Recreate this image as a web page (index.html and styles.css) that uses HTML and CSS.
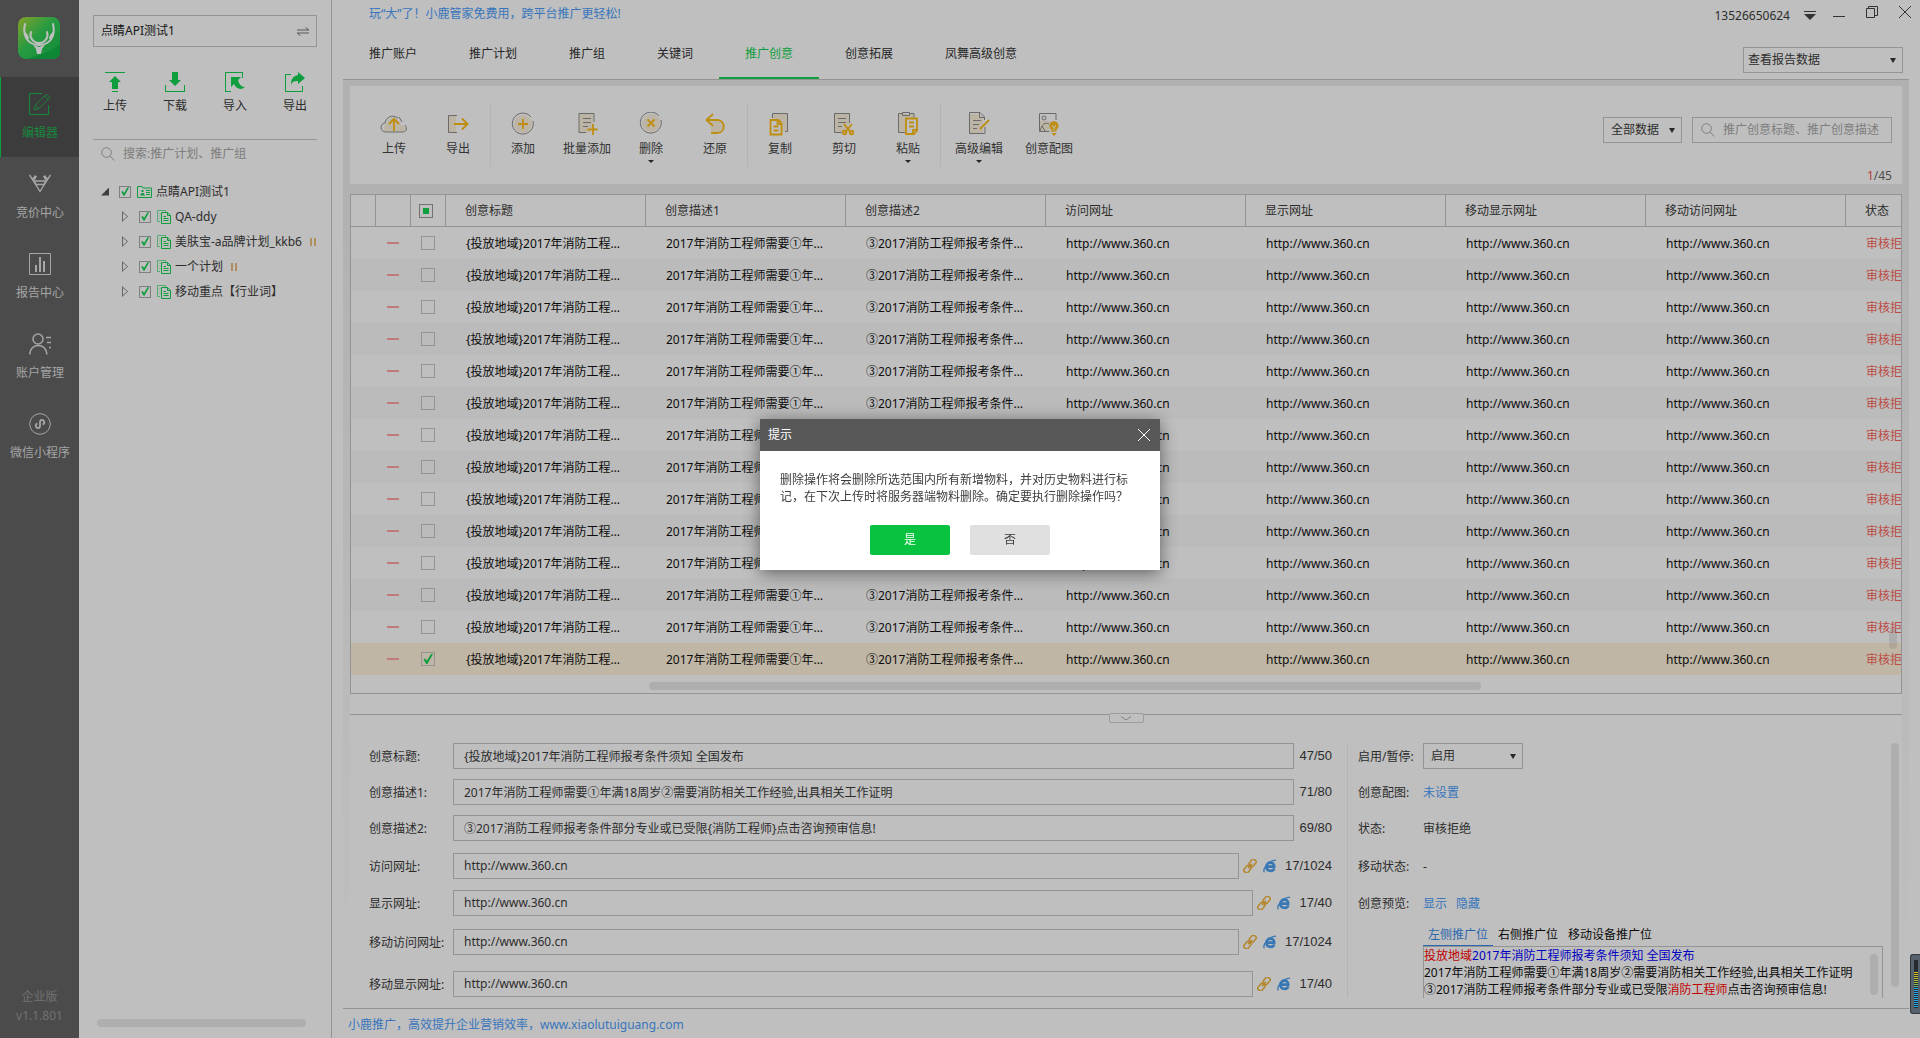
FILE: index.html
```html
<!DOCTYPE html>
<html lang="zh-CN">
<head>
    <meta charset="UTF-8">
    <title>小鹿推广编辑器</title>
    <link rel="stylesheet" href="styles.css">
</head>
<body>
    <svg class="sprite" aria-hidden="true">
        <symbol id="i-search" viewBox="0 0 14 14"><circle cx="5.5" cy="5.5" r="4.8"/><path d="M9 9l4.5 4.5"/></symbol>
        <symbol id="i-plan" viewBox="0 0 14 14"><path d="M3 11.5H.5V.5h8v2M2.5 3.5h1M2.5 6h1M2.5 8.500h1" opacity=".6"/><path d="M4.500 2.500h6l3 3v8h-9zM10.500 2.500v3h3M6.500 6.500h2.500M6.500 8.500h5M6.500 10.500h5"/></symbol>
        <symbol id="i-link" viewBox="0 0 14 14"><g transform="rotate(-50 7 7)" stroke-width="1.500"><rect x="-.8" y="4.500" width="7.200" height="5" rx="1.500"/><rect x="7.600" y="4.500" width="7.200" height="5" rx="1.500"/><path d="M4 7h6"/></g></symbol>
        <symbol id="i-ie" viewBox="0 0 14 14"><path d="M11.300 9.300C10 13.200 3.300 12.700 3.400 7.600 3.500 2.400 11.500 2.200 11.200 7.600H4.500" stroke-width="2.600"/><path d="M1.500 13.300C-1 10.500 5 1.500 13 1.200" stroke-width="1.300"/></symbol>
    </svg>

    <div class="app">
        <nav class="sidebar">
            <svg class="logo" viewBox="0 0 42 42">
                <defs><linearGradient id="lg" x1="0" y1="0" x2="1" y2="1"><stop offset="0" stop-color="#b4d838"/><stop offset=".45" stop-color="#35cf58"/><stop offset="1" stop-color="#16b94a"/></linearGradient></defs>
                <rect width="42" height="42" rx="8" fill="url(#lg)"/>
                <path d="M9 42C20 38 34 35 42 27v8q0 7-8 7z" fill="#12b548"/>
                <g fill="none" stroke="#fff" stroke-width="2" stroke-linecap="round"><path d="M7 7C4 19 10 28 21 28S38 19 35 7M7 16q2 2 3 5M35 16q-2 2-3 5M13 15c-2 5 2 11 8 11s10-6 8-11"/></g>
                <path d="M15 28l6 2 6-2-3 4-1 5h-4l-1-5z" fill="#fff"/>
            </svg>
            <a href="#" class="nav-item active">
                <svg viewBox="0 0 22 22"><path d="M13 .5H.5v21h19V12M5 17l1.500-5L17.500 1l3.500 3.500L10 15.500zM15.500 3l3.500 3.500M7 12.500l2.500 2.500"/></svg>
                <span>编辑器</span>
            </a>
            <a href="#" class="nav-item">
                <svg viewBox="0 0 22 22"><path d="M4.500 8h13L11 18.500zM.5 2L4.500 8M6.500 2.500l-3 4M21.500 2L17.500 8M15.500 2.500l3 4M7.500 3l-3 5M14.500 3l3 5M4.500 8l3 3.500h7l3-3.500" stroke-width="1.400"/></svg>
                <span>竞价中心</span>
            </a>
            <a href="#" class="nav-item">
                <svg viewBox="0 0 22 22"><path d="M.5.5h21v21H.5z"/><path d="M7 12v7M11 4v15M15 8v11" stroke-width="2"/></svg>
                <span>报告中心</span>
            </a>
            <a href="#" class="nav-item">
                <svg viewBox="0 0 22 22"><g stroke-width="1.500"><circle cx="9" cy="6" r="5"/><path d="M.8 21.500c0-12 17-12 17 0M17 4.500h5M18 9.500h4M20 14.500h2"/></g></svg>
                <span>账户管理</span>
            </a>
            <a href="#" class="nav-item">
                <svg viewBox="0 0 22 22"><circle cx="11" cy="11" r="10.300"/><path d="M8.500 10.500c-3 1-2 4.500.5 4.500 1.500 0 2-1 2-2V9c0-1 .5-2 2-2 2.500 0 3.500 3.500.5 4.500" stroke-width="1.800"/></svg>
                <span>微信小程序</span>
            </a>
            <div class="version">企业版<br>v1.1.801</div>
        </nav>

        <aside class="tree-panel">
            <button class="account-switch">点睛API测试1
                <svg viewBox="0 0 12 9"><path d="M0 3h12L8.500.5M12 6H0l3.500 2.500"/></svg>
            </button>
            <div class="account-tools">
                <button><svg viewBox="0 0 20 20"><path d="M0 0h20v1H0zM10 4l6 6h-3v7H7v-7H4zM7 19h6v1H7z"/></svg>上传</button>
                <button><svg viewBox="0 0 20 20"><path d="M7 0h6v8h3l-6 6-6-6h3zM0 13h1v6h18v-6h1v7H0z"/></svg>下载</button>
                <button><svg viewBox="0 0 20 20"><path d="M0 0h18v6h-1V1H1v18h5v1H0zM6 5h10l-3 3c1 4 3 7 7 7-5 4-9 1-11-3l-3 3z"/></svg>导入</button>
                <button><svg viewBox="0 0 20 20"><path d="M0 2h6v1H1v16h16v-5h1v6H0zM13 0l7 6-7 6V9c-4-.5-6 1-7 4 0-6 2-9 7-10z"/></svg>导出</button>
            </div>
            <div class="tree-search">
                <svg><use href="#i-search"/></svg>
                <input type="text" aria-label="搜索" placeholder="搜索:推广计划、推广组">
            </div>
            <ul class="tree">
                <li class="root"><i class="arrow open"></i>
                    <label><input type="checkbox" checked>
                    <svg viewBox="0 0 15 12"><path d="M.5 11.500V.5H5L6 2h8.500v9.500zM9 4.500h4M9 6.500h4M9 8.500h4"/><path d="M3 9.500h5L6.500 7h-2zM4.500 4h2v2h-2z" fill="currentColor" stroke="none"/></svg>点睛API测试1</label></li>
                <li><i class="arrow"></i><label><input type="checkbox" checked><svg><use href="#i-plan"/></svg>QA-ddy</label></li>
                <li><i class="arrow"></i><label><input type="checkbox" checked><svg><use href="#i-plan"/></svg>美肤宝-a品牌计划_kkb6</label><i class="pause"></i></li>
                <li><i class="arrow"></i><label><input type="checkbox" checked><svg><use href="#i-plan"/></svg>一个计划</label><i class="pause"></i></li>
                <li><i class="arrow"></i><label><input type="checkbox" checked><svg><use href="#i-plan"/></svg>移动重点【行业词】</label></li>
            </ul>
            <div class="scroll-x"></div>
        </aside>

        <main class="main">
            <header class="header">
                <div class="title-bar">
                    <a href="#" class="promo">玩“大”了！小鹿管家免费用，跨平台推广更轻松!</a>
                    <div class="win-tools">
                        <span>13526650624</span>
                        <button aria-label="菜单"><svg viewBox="0 0 12 12"><path d="M0 1.500h12"/><path d="M0 4h12l-6 6z" fill="currentColor" stroke="none"/></svg></button>
                        <button aria-label="最小化"><svg viewBox="0 0 12 12"><path d="M0 10.500h12"/></svg></button>
                        <button aria-label="还原"><svg viewBox="0 0 12 12"><path d="M.5 2.500h8v9h-8zM2.500 2V.5h9v9h-3"/></svg></button>
                        <button aria-label="关闭"><svg viewBox="0 0 12 12"><path d="M0 0l12 12M12 0L0 12"/></svg></button>
                    </div>
                </div>
                <div class="tab-bar">
                    <nav class="tabs">
                        <a href="#">推广账户</a>
                        <a href="#">推广计划</a>
                        <a href="#">推广组</a>
                        <a href="#">关键词</a>
                        <a href="#" class="active">推广创意</a>
                        <a href="#">创意拓展</a>
                        <a href="#">凤舞高级创意</a>
                    </nav>
                    <div class="select report"><select aria-label="报告数据"><option>查看报告数据</option></select></div>
                </div>
            </header>

            <div class="content">
                <section class="toolbar">
                    <div class="tool-row">
                        <div class="group">
                            <button><svg viewBox="0 0 28 24"><path class="soft" d="M6 20q-5-4 1-9 3-8 10-5l4 7 5 2-2 5z"/><path d="M25 13c3 4 1 7-3 7H6c-6 0-7-8-1-9 1-6 7-9 13-5M19 5l3 5"/><path class="hot" d="M14 19V8M9 12l5-5 5 5"/></svg>上传</button>
                            <button><svg viewBox="0 0 24 24"><path class="soft" d="M2 3h8v18H2z"/><path d="M11 3.500H2.500v17H11"/><path class="hot" d="M8 12h13M16 6.500l5.500 5.500-5.500 5.500"/></svg>导出</button>
                        </div>
                        <div class="group">
                            <button><svg viewBox="0 0 24 24"><circle class="soft" cx="12" cy="12" r="9"/><path d="M20 5a10.500 10.500 0 1 0 2 4"/><path class="hot" d="M12 7v10M7 12h10"/></svg>添加</button>
                            <button><svg viewBox="0 0 24 24"><path class="soft" d="M4 2h14v12l-4 7H4z"/><path d="M19 10V1.500H4v19h7M8 6.500h8M8 10.500h8M8 14.500h5"/><path class="hot" d="M18 12v11M12.500 17.500h10"/></svg>批量添加</button>
                            <button class="more"><svg viewBox="0 0 24 24"><circle class="soft" cx="12" cy="11" r="9"/><path d="M20 4a10.500 10.500 0 1 0 2 4"/><path class="hot" d="M8.500 7.500l7 7M15.500 7.500l-7 7" stroke-width="2.200"/></svg>删除</button>
                            <button><svg viewBox="0 0 24 24"><path class="soft" d="M8 8h8q6 1 4 9l-4 3H8z"/><path class="hot" d="M10 2L3.500 8 10 14M4 8h10c9 0 9 13 0 13H8" stroke-width="2"/></svg>还原</button>
                        </div>
                        <div class="group">
                            <button><svg viewBox="0 0 24 24"><path class="soft" d="M5 2h14v17H5z"/><path d="M4.500 6V1.500h15v18H17"/><path class="hot box" d="M2.500 8h8l3 3v11.500h-11zM9.500 8v4h4M5.500 14.500h5M5.500 18.500h5"/></svg>复制</button>
                            <button><svg viewBox="0 0 24 24"><path class="soft" d="M3 2h14v12l-6 7H3z"/><path d="M17.500 11V1.500h-15v19h7M6 6.500h8M6 10.500h8M6 14.500h4"/><path class="hot" d="M12 12l7 9M20 12l-7 9"/><circle class="hot" cx="12.500" cy="20.500" r="1.800"/><circle class="hot" cx="19.500" cy="20.500" r="1.800"/></svg>剪切</button>
                            <button class="more"><svg viewBox="0 0 24 24"><path class="soft" d="M3 2h15v18H3z"/><path d="M9 20.500H2.500v-19H6M14 1.500h4V6M6.500.5h7v3h-7z"/><path class="hot box" d="M10 6.500h11v12L18 22h-8zM13 10.500h5M13 14.500h5M21 18h-4v4"/></svg>粘贴</button>
                        </div>
                        <div class="group wide">
                            <button class="more"><svg viewBox="0 0 24 24"><path class="soft" d="M3 2h9l4 5v14H3z"/><path d="M18 15v6.500H2.500V.5H13L17.500 5v3M12.500.5v5H17M6 8.500h8M6 12.500h6M6 16.500h4"/><path class="hot" d="M13 17l9-9" stroke-width="3"/></svg>高级编辑</button>
                            <button><svg viewBox="0 0 24 24"><path class="soft" d="M3 9h15v11H3z"/><path d="M19 8V1.500H2.500v18H12M3 19c2-7 5-9 9-7M8 19l-3-5"/><circle cx="7" cy="6" r="2"/><path class="bulb" d="M12.500 14a4.500 4.500 0 1 1 7 3.500v2h-5v-2q-2-1-2-3.500zM14.500 21h5l-2.500 3z"/><path class="wire" d="M15 13l2 3 2-3M17 16v3"/></svg>创意配图</button>
                        </div>
                        <div class="filters">
                            <div class="select"><select aria-label="数据范围"><option>全部数据</option></select></div>
                            <div class="search-box">
                                <svg><use href="#i-search"/></svg>
                                <input type="text" aria-label="搜索创意" placeholder="推广创意标题、推广创意描述">
                            </div>
                        </div>
                    </div>
                    <div class="counter"><b>1</b>/45</div>
                </section>

                <section class="table-box">
                    <table>
                        <colgroup>
                            <col class="c-flag"><col class="c-mark"><col class="c-mark">
                            <col class="c-data"><col class="c-data"><col class="c-data"><col class="c-data"><col class="c-data"><col class="c-data"><col class="c-data">
                            <col>
                        </colgroup>
                        <thead>
                            <tr>
                                <th></th><th></th><th class="pick"><input type="checkbox" class="partial" aria-label="全选"></th>
                                <th>创意标题</th><th>创意描述1</th><th>创意描述2</th><th>访问网址</th><th>显示网址</th><th>移动显示网址</th><th>移动访问网址</th><th>状态</th>
                            </tr>
                        </thead>
                        <tbody id="rows"></tbody>
                    </table>
                    <div class="table-foot"><div class="scroll-x"></div></div>
                    <div class="scroll-y"></div>
                </section>

                <div class="splitter"><button aria-label="收起"><svg viewBox="0 0 10 5"><path d="M0 .5l5 3.500 5-3.500"/></svg></button></div>

                <section class="detail">
                    <form class="fields">
                        <div class="field"><label for="f1">创意标题:</label><input id="f1" type="text" value="{投放地域}2017年消防工程师报考条件须知 全国发布"><span class="count">47/50</span></div>
                        <div class="field"><label for="f2">创意描述1:</label><input id="f2" type="text" value="2017年消防工程师需要①年满18周岁②需要消防相关工作经验,出具相关工作证明"><span class="count">71/80</span></div>
                        <div class="field"><label for="f3">创意描述2:</label><input id="f3" type="text" value="③2017消防工程师报考条件部分专业或已受限{消防工程师}点击咨询预审信息!"><span class="count">69/80</span></div>
                        <div class="field"><label for="f4">访问网址:</label><input id="f4" type="text" value="http://www.360.cn"><svg class="link"><use href="#i-link"/></svg><svg class="ie"><use href="#i-ie"/></svg><span class="count">17/1024</span></div>
                        <div class="field"><label for="f5">显示网址:</label><input id="f5" type="text" value="http://www.360.cn"><svg class="link"><use href="#i-link"/></svg><svg class="ie"><use href="#i-ie"/></svg><span class="count">17/40</span></div>
                        <div class="field"><label for="f6">移动访问网址:</label><input id="f6" type="text" value="http://www.360.cn"><svg class="link"><use href="#i-link"/></svg><svg class="ie"><use href="#i-ie"/></svg><span class="count">17/1024</span></div>
                        <div class="field"><label for="f7">移动显示网址:</label><input id="f7" type="text" value="http://www.360.cn"><svg class="link"><use href="#i-link"/></svg><svg class="ie"><use href="#i-ie"/></svg><span class="count">17/40</span></div>
                    </form>
                    <div class="info">
                        <div class="info-row"><label for="enable">启用/暂停:</label><div class="select"><select id="enable"><option>启用</option></select></div></div>
                        <div class="info-row"><span>创意配图:</span><a href="#">未设置</a></div>
                        <div class="info-row"><span>状态:</span>审核拒绝</div>
                        <div class="info-row"><span>移动状态:</span>-</div>
                        <div class="info-row"><span>创意预览:</span><a href="#">显示</a><a href="#">隐藏</a></div>
                        <div class="preview">
                            <div class="preview-tabs"><button class="active">左侧推广位</button><button>右侧推广位</button><button>移动设备推广位</button></div>
                            <div class="preview-box">
                                <p class="ad-title"><em>投放地域</em>2017年消防工程师报考条件须知 全国发布</p>
                                <p>2017年消防工程师需要①年满18周岁②需要消防相关工作经验,出具相关工作证明</p>
                                <p>③2017消防工程师报考条件部分专业或已受限<em>消防工程师</em>点击咨询预审信息!</p>
                                <div class="scroll-y"></div>
                            </div>
                        </div>
                    </div>
                    <div class="scroll-y"></div>
                </section>
            </div>
            <footer class="footer"><a href="#">小鹿推广，高效提升企业营销效率，www.xiaolutuiguang.com</a></footer>
        </main>
    </div>

    <div class="backdrop">
        <div class="dialog" role="dialog" aria-labelledby="dlg-title">
            <div class="dialog-head">
                <span id="dlg-title">提示</span>
                <button aria-label="关闭"><svg viewBox="0 0 12 12"><path d="M0 0l12 12M12 0L0 12"/></svg></button>
            </div>
            <p>删除操作将会删除所选范围内所有新增物料，并对历史物料进行标记，在下次上传时将服务器端物料删除。确定要执行删除操作吗？</p>
            <div class="dialog-btns"><button class="yes">是</button><button>否</button></div>
        </div>
    </div>
    <div class="meter"><i></i></div>

    <script>
        // 创意列表
        const total = 14;
        const url = 'http://www.360.cn';
        const cells = [
            '{投放地域}2017年消防工程师报考条件须知 全国发布',
            '2017年消防工程师需要①年满18周岁②需要消防相关工作经验',
            '③2017消防工程师报考条件部分专业或已受限',
            url, url, url, url
        ];
        let html = '';
        for (let i = 1; i <= total; i++) {
            const last = i === total;
            html += `<tr class="${last ? 'selected' : ''}"><td></td><td class="mark"><i></i></td>
                <td class="pick"><input type="checkbox" aria-label="选择第${i}行" ${last ? 'checked' : ''}></td>
                ${cells.map(c => `<td>${c}</td>`).join('')}<td class="status">审核拒绝</td></tr>`;
        }
        document.getElementById('rows').innerHTML = html;
    </script>
</body>
</html>
```
FILE: styles.css
```css
:root {
    --green: #14d352;
    --blue: #4c9dfc;
    --amber: #ffbc14;
    --line: #c6c6c6;
    --text: #3c3c3c;
}

* {
    box-sizing: border-box;
}

body {
    margin: 0;
    background: #fff;
    color: var(--text);
    font: 12px/16px "Noto Sans", "Noto Sans CJK SC", sans-serif;
}

button, input, select {
    font: inherit;
    color: inherit;
    margin: 0;
    padding: 0;
    border: 0;
    background: none;
    border-radius: 0;
    outline: none;
}

a {
    color: var(--blue);
    text-decoration: none;
}

ul, p {
    margin: 0;
    padding: 0;
    list-style: none;
}

i, em, b {
    font-style: normal;
    font-weight: normal;
}

svg {
    display: block;
    flex: none;
    fill: none;
    stroke: currentColor;
}

.sprite {
    position: absolute;
    width: 0;
    height: 0;
}

input[type="checkbox"] {
    appearance: none;
    flex: none;
    width: 14px;
    height: 14px;
    border: 1px solid var(--line);
}

input[type="checkbox"]:checked::before {
    content: '';
    display: block;
    height: 100%;
    background: var(--green);
    clip-path: polygon(12% 52%, 28% 45%, 40% 65%, 75% 8%, 92% 8%, 45% 92%, 35% 92%);
}

input.partial {
    border-color: #999;
    background: linear-gradient(var(--green), var(--green)) center / 6px 6px no-repeat;
}

::placeholder {
    color: #a8a8a8;
    opacity: 1;
}

.app {
    display: flex;
    height: 100vh;
    overflow: hidden;
}

/* 左侧导航 */
.sidebar {
    flex: none;
    display: flex;
    flex-direction: column;
    width: 79px;
    background: #646464;
    color: #dcdcdc;
    text-align: center;
}

.logo {
    width: 42px;
    height: 42px;
    margin: 17px 18px 18px;
    stroke: none;
}

.nav-item {
    display: flex;
    flex-direction: column;
    align-items: center;
    gap: 10px;
    height: 80px;
    padding-top: 16px;
    border-left: 1px solid transparent;
    color: inherit;
}

.nav-item svg {
    width: 22px;
    height: 22px;
}

.nav-item.active {
    background: #515151;
    border-color: var(--green);
    color: #1fb452;
}

.version {
    margin-top: auto;
    padding: 0 0 13px;
    line-height: 19px;
    color: #989898;
}

/* 计划树 */
.tree-panel {
    flex: none;
    display: flex;
    flex-direction: column;
    width: 253px;
    padding: 15px 14px 11px;
    border-right: 1px solid var(--line);
}

.account-switch {
    display: flex;
    align-items: center;
    justify-content: space-between;
    flex: none;
    height: 32px;
    padding: 0 7px;
    border: 1px solid var(--line);
    color: #222;
}

.account-switch svg {
    width: 12px;
    height: 9px;
    color: #777;
}

.account-tools {
    display: flex;
    justify-content: space-between;
    margin: 25px -8px 0;
    padding-bottom: 25px;
}

.account-tools button {
    display: flex;
    flex-direction: column;
    align-items: center;
    gap: 6px;
    width: 60px;
}

.account-tools svg {
    width: 20px;
    height: 20px;
    fill: var(--green);
    stroke: none;
}

.tree-search {
    display: flex;
    align-items: center;
    gap: 8px;
    flex: none;
    height: 28px;
    padding-left: 8px;
    border-top: 1px solid var(--line);
    color: #a8a8a8;
}

.tree-search svg, .search-box svg {
    width: 14px;
    height: 14px;
}

.tree-search input {
    flex: 1;
    min-width: 0;
}

.tree {
    padding-top: 12px;
    overflow: hidden;
}

.tree li {
    display: flex;
    align-items: center;
    height: 25px;
    padding-left: 29px;
    white-space: nowrap;
}

.tree .root {
    padding-left: 8px;
}

.tree label {
    display: flex;
    align-items: center;
    margin-left: 11px;
}

.tree .root label {
    margin-left: 10px;
}

.tree input {
    width: 12px;
    height: 12px;
    border-color: #aaa;
}

.tree svg {
    width: 14px;
    height: 14px;
    margin: 0 4px 0 6px;
    color: var(--green);
}

.tree .root svg {
    width: 15px;
    height: 12px;
}

.arrow {
    flex: none;
    width: 6px;
    height: 11px;
    background: #888;
    clip-path: polygon(0 0, 100% 50%, 0 100%, 0 0, 1px 2px, 1px 9px, 5px 50%, 1px 2px);
}

.arrow.open {
    width: 8px;
    height: 8px;
    background: #555;
    clip-path: polygon(100% 0, 100% 100%, 0 100%);
}

.pause {
    flex: none;
    width: 6px;
    height: 8px;
    margin-left: 8px;
    border: solid #e8be78;
    border-width: 0 2px;
}

.scroll-x {
    height: 8px;
    border-radius: 4px;
    background: #e9e9e9;
}

.scroll-y {
    width: 8px;
    border-radius: 4px;
    background: #e9e9e9;
}

.tree-panel .scroll-x {
    flex: none;
    margin: auto 11px 0 4px;
}

/* 右侧主区 */
.main {
    flex: 1;
    display: flex;
    flex-direction: column;
    min-width: 0;
    padding: 0 11px;
}

.header {
    flex: none;
    display: flex;
    flex-direction: column;
    height: 80px;
    border-bottom: 1px solid var(--line);
}

.title-bar {
    display: flex;
    justify-content: space-between;
    height: 28px;
    margin-right: -2px;
    padding: 6px 0 0 26px;
}

.win-tools {
    display: flex;
    align-items: flex-start;
}

.win-tools span {
    margin: 2px 14px 0 0;
}

.win-tools button {
    margin-left: 21px;
    color: #444;
}

.win-tools span + button {
    margin: 4px -4px 0 0;
}

.win-tools svg {
    width: 12px;
    height: 12px;
}

.tab-bar {
    display: flex;
    flex: 1;
    justify-content: space-between;
    align-items: stretch;
}

.tabs {
    display: flex;
}

.tabs a {
    padding: 18px 26px 0;
    color: #333;
    border-bottom: 2px solid transparent;
}

.tabs a.active {
    color: var(--green);
    border-color: var(--green);
}

.select {
    position: relative;
    width: 79px;
    height: 26px;
    border: 1px solid var(--line);
}

.select select {
    appearance: none;
    width: 100%;
    height: 100%;
    padding: 0 7px;
}

.select::after {
    content: '';
    position: absolute;
    top: 10px;
    right: 6px;
    border: solid transparent;
    border-width: 5px 3px 0;
    border-top-color: #333;
    pointer-events: none;
}

.select.report {
    width: 160px;
    margin: 19px 6px 0 0;
}

.select.report select {
    padding: 0 4px;
}

.content {
    flex: 1;
    display: flex;
    flex-direction: column;
    min-height: 0;
    padding: 6px 7px 0;
    background: linear-gradient(#ededed, #ededed 12%, #fff 95%);
    border-bottom: 1px solid var(--line);
}

/* 工具栏 */
.toolbar {
    flex: none;
    height: 98px;
    padding: 17px 10px 0 12px;
    background: #fff;
}

.tool-row {
    display: flex;
    height: 64px;
}

.group {
    display: flex;
    border-right: 1px solid #efefef;
}

.group.wide {
    padding: 0 3px;
    border: 0;
}

.group button {
    position: relative;
    display: flex;
    flex-direction: column;
    align-items: center;
    gap: 5px;
    width: 64px;
    padding-top: 9px;
    color: #444;
}

.group.wide button {
    width: 70px;
}

.group svg {
    height: 24px;
    stroke: #8e8e8e;
}

.group .soft {
    fill: #fbf2de;
    stroke: none;
}

.group .hot {
    stroke: var(--amber);
    stroke-width: 1.8;
}

.group .box {
    fill: #fff;
}

.group .bulb {
    fill: var(--amber);
    stroke: none;
}

.group .wire {
    stroke: #fff;
}

.group .more::after {
    content: '';
    margin-top: -2px;
    border: solid transparent;
    border-width: 3px 3px 0;
    border-top-color: #333;
}

.filters {
    display: flex;
    gap: 10px;
    margin: 14px 0 0 auto;
}

.search-box {
    display: flex;
    align-items: center;
    gap: 8px;
    width: 200px;
    height: 26px;
    padding-left: 8px;
    border: 1px solid var(--line);
    color: #a8a8a8;
}

.search-box input {
    flex: 1;
    min-width: 0;
}

.counter {
    padding-top: 1px;
    text-align: right;
    color: #666;
}

.counter b {
    color: #f5554a;
}

/* 列表 */
.table-box {
    position: relative;
    flex: none;
    margin: 10px 0 0;
    background: #fff;
    border: 1px solid var(--line);
}

table {
    width: 100%;
    table-layout: fixed;
    border-collapse: separate;
    border-spacing: 0;
}

.c-flag {
    width: 25px;
}

.c-mark {
    width: 35px;
}

.c-data {
    width: 200px;
}

th, td {
    height: 32px;
    padding: 1px 19px 0 20px;
    text-align: left;
    font-weight: normal;
    white-space: nowrap;
    overflow: hidden;
    text-overflow: ellipsis;
}

th {
    padding-left: 19px;
    border: solid var(--line);
    border-width: 0 1px 1px 0;
}

th:last-child {
    border-right: 0;
    padding-right: 0;
}

td {
    color: #111;
}

th.pick, td.pick {
    padding: 0 0 0 8px;
}

td.pick {
    padding-left: 10px;
}

.pick input {
    display: block;
}

td.mark {
    padding: 0 12px 0 11px;
}

.mark i {
    display: block;
    height: 2px;
    background: #ffa5a5;
}

td.status {
    padding-right: 3px;
    color: #fc665c;
    text-overflow: clip;
}

tbody tr:nth-child(even) {
    background: #fafafa;
}

tbody tr.selected {
    background: #fff3dc;
}

.table-foot {
    padding: 7px 420px 3px 298px;
}

.table-box > .scroll-y {
    position: absolute;
    right: 4px;
    bottom: 44px;
    height: 20px;
    background: rgba(0, 0, 0, .09);
}

.splitter {
    flex: none;
    display: flex;
    justify-content: center;
    height: 29px;
    padding-top: 19px;
    background: linear-gradient(var(--line), var(--line)) 0 20px / 100% 1px no-repeat #fff;
}

.splitter button {
    display: flex;
    justify-content: center;
    width: 35px;
    height: 10px;
    padding-top: 2px;
    border: 1px solid #d0d0d0;
    border-radius: 2px;
    background: #fff;
}

.splitter svg {
    width: 10px;
    height: 5px;
    color: #aaa;
}

/* 编辑详情 */
.detail {
    flex: 1;
    display: flex;
    min-height: 0;
    padding: 20px 3px 10px 19px;
    background: #fff;
    overflow: hidden;
}

.fields, .info {
    display: grid;
    grid-template-rows: 36px 36px 38px 37px 39px 42px 26px;
}

.fields {
    flex: 1;
    padding-right: 15px;
    border-right: 1px solid #f0f0f0;
}

.field {
    display: flex;
    align-items: center;
    height: 26px;
}

.field label {
    width: 84px;
    padding-top: 1px;
    white-space: nowrap;
}

.field input {
    flex: 1;
    min-width: 0;
    height: 26px;
    padding: 0 10px 1px;
    border: 1px solid var(--line);
}

.field svg {
    width: 14px;
    height: 14px;
}

.link {
    margin: 0 6px 0 4px;
    color: #f0b43c;
}

.ie {
    margin-right: 3px;
    color: #4a9ff0;
}

.count {
    margin-left: 5px;
    font: 13px/16px "Liberation Sans", sans-serif;
}

.info {
    width: 543px;
    padding-left: 10px;
}

.info-row {
    display: flex;
    align-items: center;
    height: 26px;
    padding-top: 1px;
}

.info-row > :first-child {
    width: 65px;
    white-space: nowrap;
}

.info-row .select {
    width: 100px;
    margin-top: -1px;
}

.info-row a + a {
    margin-left: 9px;
}

.preview {
    grid-row: 6 / 8;
    align-self: start;
    margin: -3px 0 0 65px;
    width: 460px;
}

.preview-tabs {
    display: flex;
    height: 20px;
}

.preview-tabs button {
    padding: 0 5px 2px;
    color: #111;
    border-bottom: 1px solid transparent;
}

.preview-tabs .active {
    color: #3a8ae8;
    border-color: #3a8ae8;
}

.preview-box {
    position: relative;
    height: 52px;
    border: 1px solid var(--line);
    border-bottom: 0;
    line-height: 17px;
    color: #111;
    white-space: nowrap;
}

.preview-box em {
    color: #f00;
}

.preview-box .scroll-y {
    position: absolute;
    top: 7px;
    right: 4px;
    height: 41px;
}

.preview-box .ad-title {
    color: #00f;
}

.detail > .scroll-y {
    height: 244px;
    margin-left: auto;
}

.footer {
    flex: none;
    height: 29px;
    padding: 8px 5px;
}

/* 提示弹窗 */
.backdrop {
    position: fixed;
    inset: 0;
    display: flex;
    align-items: center;
    justify-content: center;
    padding-bottom: 50px;
    background: rgba(0, 0, 0, .25);
}

.dialog {
    width: 400px;
    background: #fff;
    box-shadow: 0 3px 16px rgba(0, 0, 0, .5);
}

.dialog-head {
    display: flex;
    align-items: center;
    justify-content: space-between;
    height: 32px;
    padding: 0 10px 0 8px;
    background: #585858;
    color: #fff;
}

.dialog-head svg {
    width: 12px;
    height: 12px;
}

.dialog p {
    padding: 20px 28px 20px 20px;
    line-height: 17px;
}

.dialog-btns {
    display: flex;
    justify-content: center;
    gap: 20px;
    padding-bottom: 15px;
}

.dialog-btns button {
    width: 80px;
    height: 30px;
    border-radius: 2px;
    background: #e0e0e0;
}

.dialog-btns .yes {
    background: #08c340;
    color: #fff;
}

/* 桌面悬浮音量条 */
.meter {
    position: fixed;
    right: 0;
    bottom: 24px;
    width: 10px;
    height: 60px;
    padding: 5px 3px;
    border: 1px solid #33383f;
    border-right: 0;
    border-radius: 3px 0 0 3px;
    background: #56616c;
}

.meter i {
    display: block;
    width: 4px;
    height: 48px;
    background:
        repeating-linear-gradient(transparent 0 1px, #262b33 1px 2px),
        linear-gradient(#262b33 25%, #e8c020 25%, #9ac83c 50%, #20a8e8 60%);
}
```
